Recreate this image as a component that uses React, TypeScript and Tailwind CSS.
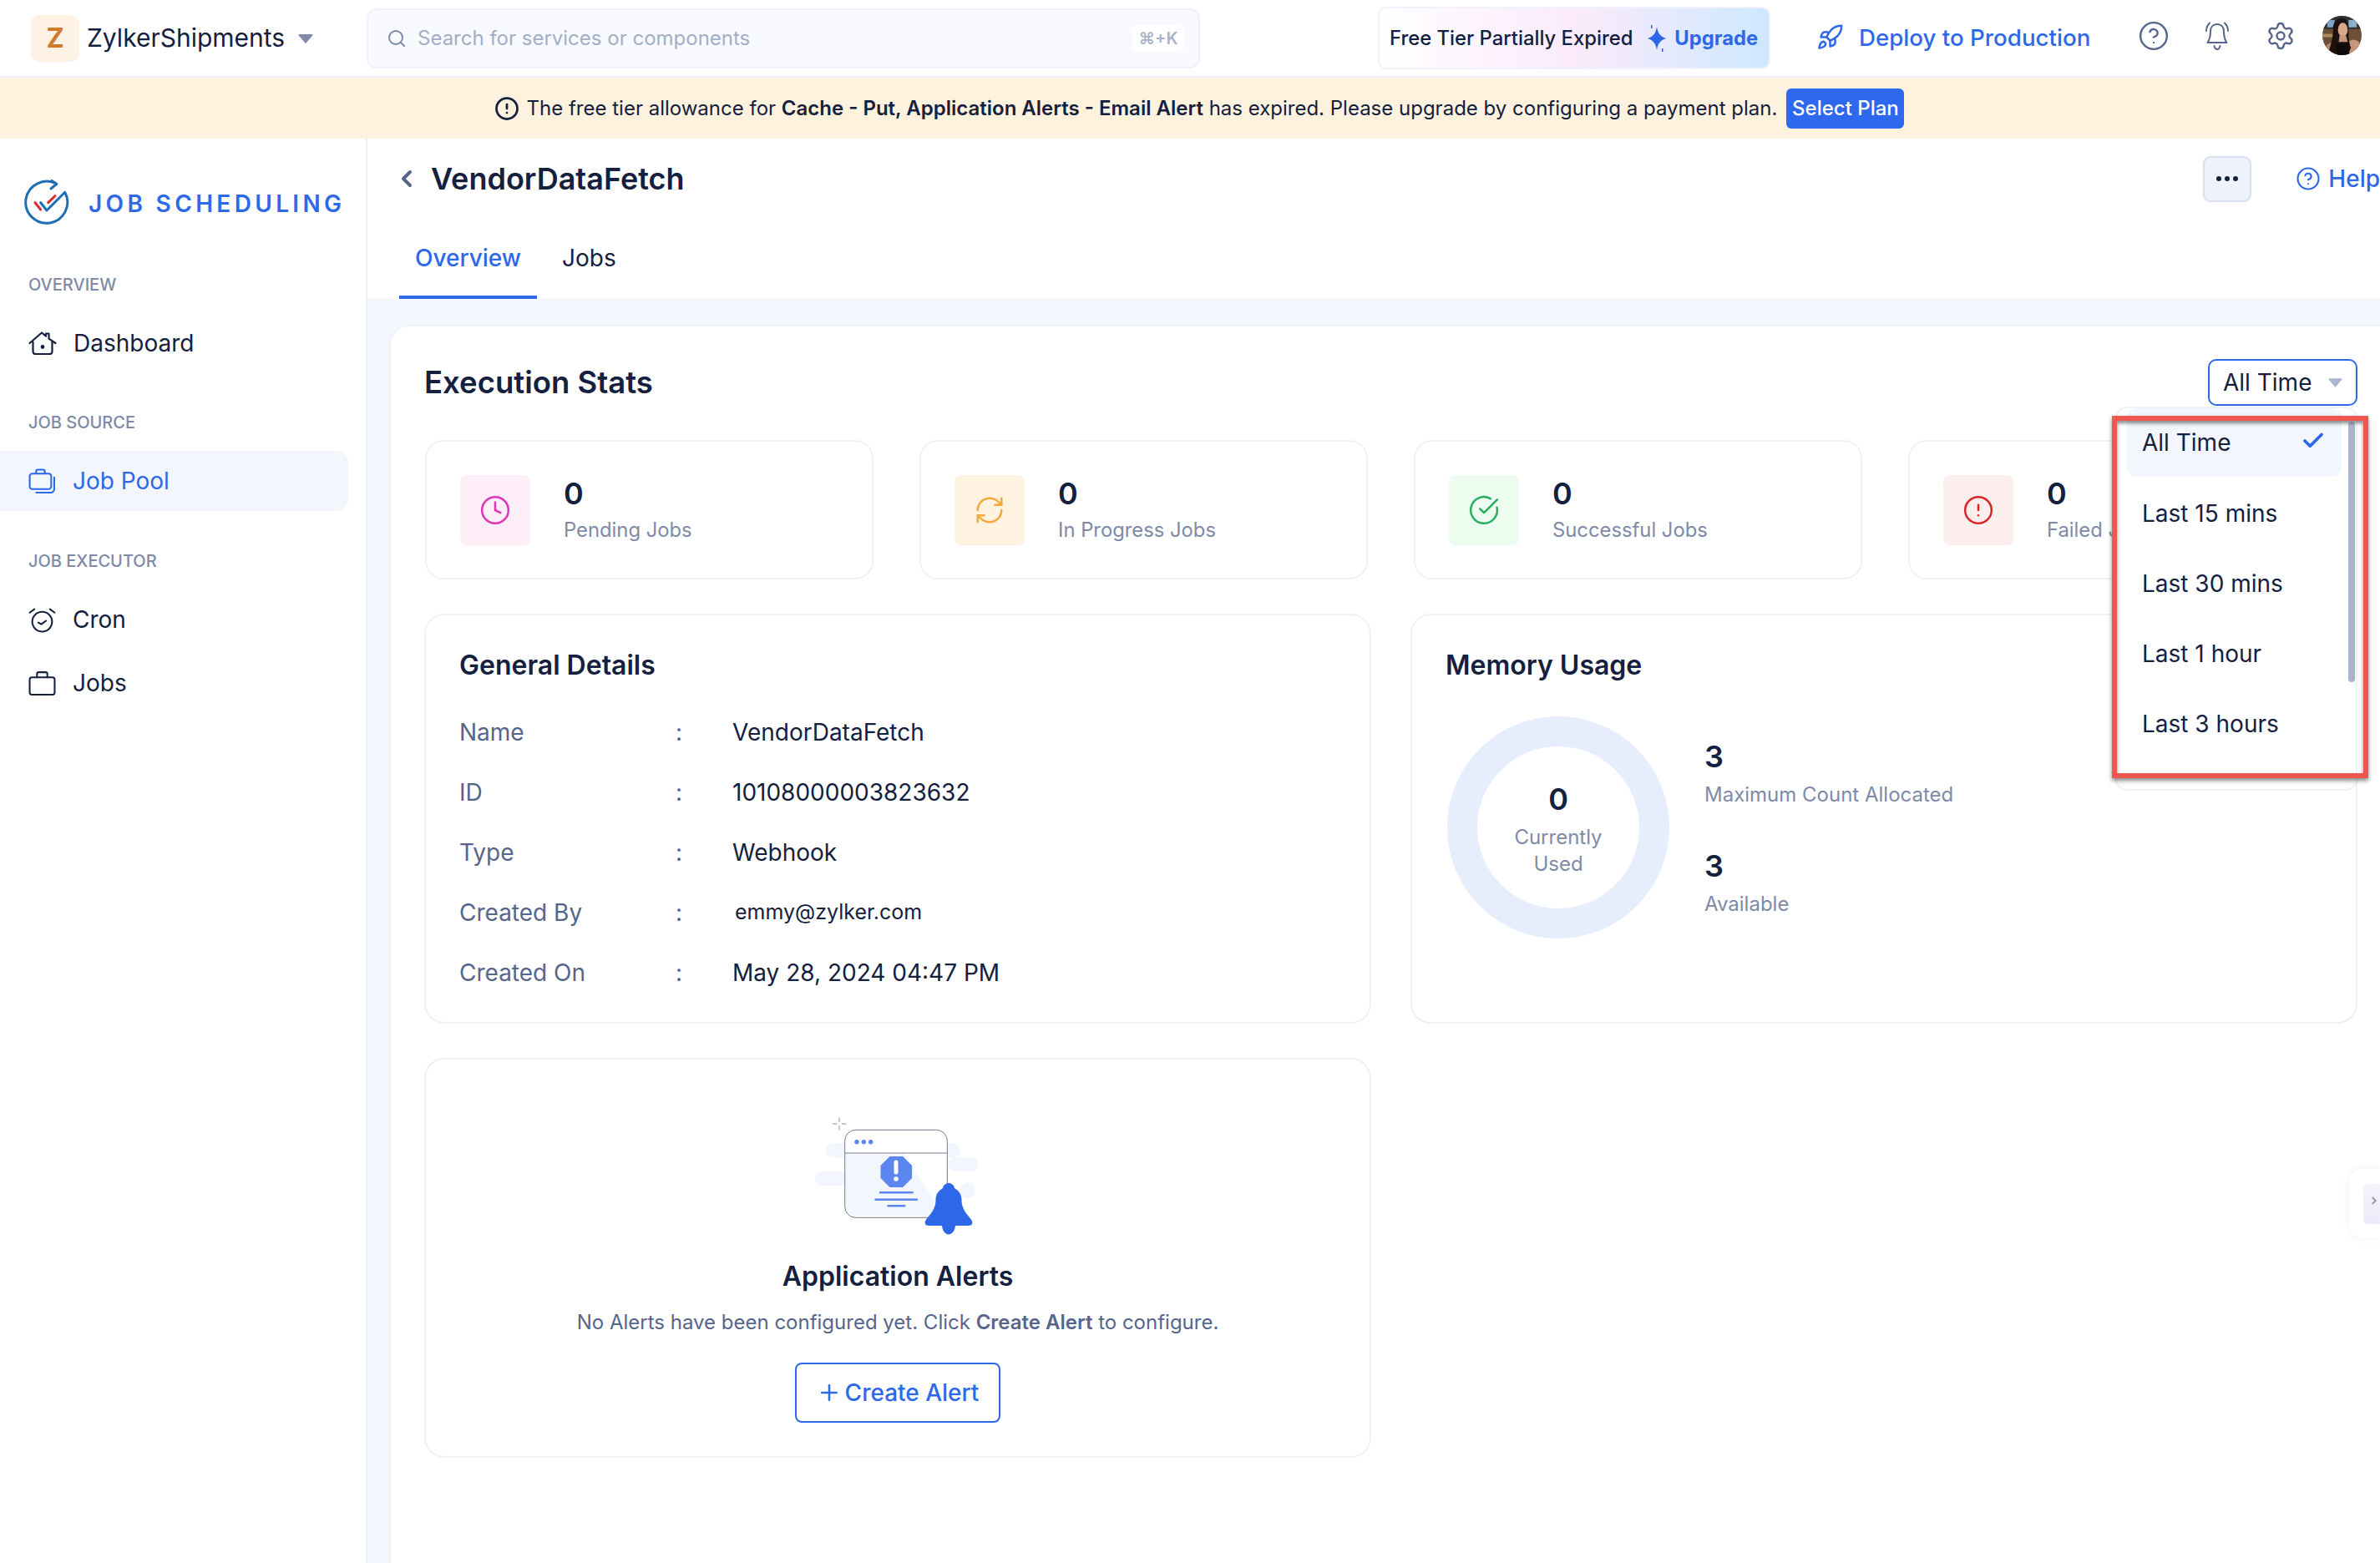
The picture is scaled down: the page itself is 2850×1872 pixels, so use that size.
import React from "react";
import { Search, CircleAlert, CircleHelp, Rocket, Settings, Clock, RefreshCw, CircleCheckBig, Check, ChevronLeft, ChevronRight, Plus } from "lucide-react";

const Caret = ({ className }: { className: string }) => (
  <svg viewBox="0 0 18 12" className={className} fill="currentColor">
    <path d="M1.5 1h15a1 1 0 0 1 .8 1.6l-7.5 8.6a1 1 0 0 1-1.6 0L.7 2.6A1 1 0 0 1 1.5 1z" />
  </svg>
);

const BellLines = () => (
  <svg viewBox="0 0 32 36" className="w-[32px] h-[36px] text-[#56658a]" fill="none" stroke="currentColor" strokeWidth="2" strokeLinecap="round" strokeLinejoin="round">
    <path d="M16 4c-5 0-8 3.5-8 8.5 0 7-1 10-3.5 13.5h23C25 22.5 24 19.500 24 12.500 24 7.500 21 4 16 4z" />
    <path d="M12.500 30c.5 2.500 1.800 4 3.500 4s3-1.500 3.500-4" />
    <path d="M3 12c0-4 1.500-7 4-9.500M29 12c0-4-1.500-7-4-9.500" />
  </svg>
);

const HouseIcon = () => (
  <svg viewBox="0 0 34 30" className="w-[34px] h-[30px] text-[#14203e]" fill="none" stroke="currentColor" strokeWidth="2.200" strokeLinecap="round" strokeLinejoin="round">
    <path d="M1.500 15 16 2.500l5 4.200V3.500h3.500v6.200L32.500 15" />
    <path d="M5.500 13.500V25a3 3 0 0 0 3 3h17a3 3 0 0 0 3-3V13.500" />
    <circle cx="17" cy="19.500" r="1.300" fill="currentColor" />
  </svg>
);

const PoolIcon = () => (
  <svg viewBox="0 0 32 30" className="w-[33px] h-[31px] text-[#2d68e8]" fill="none" stroke="currentColor" strokeWidth="2" strokeLinecap="round" strokeLinejoin="round">
    <rect x="1.500" y="6" width="25" height="18" rx="3" />
    <path d="M9 6V3.500a2 2 0 0 1 2-2h6a2 2 0 0 1 2 2V6" />
    <path d="M30 10.500V24a4 4 0 0 1-4 4H9" />
  </svg>
);

const CronIcon = () => (
  <svg viewBox="0 0 32 30" className="w-[33px] h-[31px] text-[#14203e]" fill="none" stroke="currentColor" strokeWidth="2" strokeLinecap="round" strokeLinejoin="round">
    <circle cx="16" cy="17" r="11.500" />
    <path d="M11.500 18l3.500 2 5.500-4" />
    <path d="M1.500 6.500 7 2.500M30.500 6.500 25 2.500" />
  </svg>
);

const BagIcon = () => (
  <svg viewBox="0 0 32 30" className="w-[33px] h-[31px] text-[#14203e]" fill="none" stroke="currentColor" strokeWidth="2" strokeLinecap="round" strokeLinejoin="round">
    <rect x="1.500" y="8" width="29" height="20" rx="2.500" />
    <path d="M10 8V4a2 2 0 0 1 2-2h8a2 2 0 0 1 2 2v4" />
  </svg>
);

const Logo = () => (
  <svg viewBox="0 0 54 54" className="w-[54px] h-[54px] overflow-visible" fill="none" strokeLinecap="round" strokeLinejoin="round">
    <path d="M35.700 3.300A25 25 0 1 0 45.700 13.300L24 35l-7.300-9.300" stroke="#1f6fb5" strokeWidth="3" />
    <path d="M30 -0.600 35.700 3.300 29 9" stroke="#1f6fb5" strokeWidth="3" />
    <path d="M10 25.700l6.700 8.300" stroke="#dc2f2f" strokeWidth="3" />
    <path d="M25.700 25.700 34 17.700" stroke="#dc2f2f" strokeWidth="3" />
  </svg>
);

const Sparkle = () => (
  <svg viewBox="0 0 24 34" className="w-[24px] h-[34px] text-[#2d68e8]" fill="currentColor">
    <path d="M12 3c1 7 4 12 11 14-7 2-10 7-11 14C11 24 8 19 1 17 8 15 11 10 12 3z" />
    <path d="M5 1h1.500v4H5zM18 29h1.500v4H18z" />
  </svg>
);

const Avatar = () => (
  <svg viewBox="0 0 48 48" className="w-[47px] h-[47px] rounded-full">
    <rect width="48" height="48" fill="#6d5038" />
    <rect width="48" height="16" fill="#2f3036" />
    <rect x="6" y="5" width="9" height="9" fill="#7fa6c8" />
    <rect x="32" y="5" width="10" height="9" fill="#8daecb" />
    <rect y="22" width="14" height="4" fill="#b08a5e" />
    <circle cx="38" cy="38" r="9" fill="#c79678" />
    <circle cx="11" cy="40" r="7" fill="#b88468" />
    <path d="M24 3c-7 0-11 5-11 13 0 8-1 14-5 27l7 5h16l4-9c-3-8-3-14-3-23 0-8-2-13-8-13z" fill="#1d1210" />
    <ellipse cx="25" cy="17" rx="6" ry="8.500" fill="#d7a78e" />
    <path d="M21 24h8l2 8H20z" fill="#c79678" />
    <path d="M17 33c4 2 10 2 15-1l1 16H18z" fill="#0f0b0b" />
  </svg>
);

const AlertArt = () => (
  <svg viewBox="0 0 200 142" className="w-[200px] h-[142px]" fill="none">
    <g fill="#f3f6fe">
      <rect x="14" y="32" width="30" height="17" rx="8.500" />
      <rect x="1" y="66" width="44" height="17" rx="8.500" />
      <rect x="150" y="32" width="25" height="17" rx="8.500" />
      <rect x="160" y="49" width="36" height="17" rx="8.500" />
      <path d="M183 79l7 3 3 7-3 7-7 3-6-3-3-7 3-7z" />
    </g>
    <rect x="36.700" y="16.300" width="122.600" height="105" rx="13" fill="#ffffff" />
    <path d="M37 44h70l48 75H50a13 13 0 0 1-13-13z" fill="#f2f6fe" />
    <rect x="36.700" y="16.300" width="122.600" height="105" rx="13" stroke="#77798a" strokeWidth="1" />
    <path d="M36.700 44h122.600" stroke="#77798a" strokeWidth="1" />
    <g fill="#5b86ef">
      <circle cx="51" cy="30.700" r="2.700" />
      <circle cx="59.300" cy="30.700" r="2.700" />
      <circle cx="67.700" cy="30.700" r="2.700" />
      <path d="M90.500 48h15.600l11 11v15l-11 11H90.500l-11-11V59z" />
    </g>
    <path d="M98 55v12" stroke="#fff" strokeWidth="5" strokeLinecap="round" />
    <circle cx="98" cy="75" r="2.800" fill="#fff" />
    <path d="M79 91.300h38.700M73.500 99.700h49.500M88.500 107.300h19.800" stroke="#5b86ef" strokeWidth="2.400" strokeLinecap="round" />
    <path d="M30 1.500v5.500M30 11v5.500M22 9h5.500M33 9h5.500" stroke="#8f919f" strokeWidth="1" />
    <path d="M161 80c-3.500 0-6.500 2.500-7 6-5 3-8.500 7-8.500 14 0 9-3.500 14-11 23-3.500 4.500-2 8 3.500 8h15c.5 6 4 10.500 8 10.500s7.500-4.500 8-10.500h15c5.500 0 7-3.500 3.500-8-7.500-9-11-14-11-23 0-7-3.500-11-8.500-14-.5-3.500-3.500-6-7-6z" fill="#2d68e8" />
  </svg>
);

const stats = [
  { value: "0", label: "Pending Jobs", tile: "bg-[#fdeef8]", icon: <Clock className="w-[38px] h-[38px] text-[#dd35b8]" strokeWidth={1.600} /> },
  { value: "0", label: "In Progress Jobs", tile: "bg-[#fef3e0]", icon: <RefreshCw className="w-[38px] h-[38px] text-[#f5a83c]" strokeWidth={1.600} /> },
  { value: "0", label: "Successful Jobs", tile: "bg-[#ecfcef]", icon: <CircleCheckBig className="w-[38px] h-[38px] text-[#27ae60]" strokeWidth={1.600} /> },
  { value: "0", label: "Failed Jobs", tile: "bg-[#fdeeee]", icon: <CircleAlert className="w-[38px] h-[38px] text-[#dc2626]" strokeWidth={1.600} /> },
];

const details = [
  { label: "Name", value: "VendorDataFetch", cls: "text-[28px]" },
  { label: "ID", value: "10108000003823632", cls: "text-[28px]" },
  { label: "Type", value: "Webhook", cls: "text-[28px]" },
  { label: "Created By", value: "emmy@zylker.com", cls: "text-[25px] pl-[3px]" },
  { label: "Created On", value: "May 28, 2024 04:47 PM", cls: "text-[28px]" },
];

const ranges = ["Last 15 mins", "Last 30 mins", "Last 1 hour", "Last 3 hours"];

export default function App() {
  return (
    <div className="relative w-[2850px] h-[1872px] overflow-hidden bg-white font-['Inter',sans-serif] text-[#14203e]">
      {/* top bar */}
      <header className="flex items-center h-[93px] border-b-2 border-[#eef0f9]">
        <div className="flex items-center w-[439px] pl-[37px]">
          <div className="flex items-center justify-center w-[58px] h-[56px] rounded-[10px] bg-[#fdf2e4] text-[32px] font-bold text-[#cf7a2c]">Z</div>
          <span className="ml-[9px] text-[30px]">ZylkerShipments</span>
          <Caret className="ml-[16px] w-[18px] h-[12px] text-[#7e8aa6]" />
        </div>
        <div className="flex items-center w-[998px] h-[72px] rounded-[12px] border-2 border-[#eef0fa] bg-[#f8faff] pl-[22px] pr-[17px]">
          <Search className="w-[24px] h-[24px] text-[#7e8aa6]" strokeWidth={2} />
          <span className="ml-[13px] text-[24px] text-[#a3aec6]">Search for services or components</span>
          <span className="ml-auto flex items-center justify-center w-[62px] h-[32px] rounded-[6px] bg-white text-[20px] font-semibold text-[#a8b2c8]">⌘+K</span>
        </div>
        <div className="ml-[213px] flex items-center w-[470px] h-[75px] rounded-[10px] border-2 border-[#f0f1fa] bg-gradient-to-r from-[#ffffff] via-[#fbeafb] to-[#cde8fe] pl-[12px]">
          <span className="text-[23.800px] font-medium whitespace-nowrap">Free Tier Partially Expired</span>
          <span className="ml-[17px]"><Sparkle /></span>
          <span className="ml-[9px] text-[23.800px] font-bold text-[#2d68e8]">Upgrade</span>
        </div>
        <Rocket className="ml-[55px] w-[33px] h-[33px] text-[#2d68e8] -mt-[2px]" strokeWidth={1.800} />
        <span className="ml-[18px] text-[27.700px] font-medium text-[#2d68e8] whitespace-nowrap">Deploy to Production</span>
        <CircleHelp className="ml-[57px] w-[38px] h-[38px] text-[#56658a] -mt-[6px]" strokeWidth={1.500} />
        <span className="ml-[41px] -mt-[6px]"><BellLines /></span>
        <Settings className="ml-[42px] w-[36px] h-[36px] text-[#56658a] -mt-[6px]" strokeWidth={1.600} />
        <span className="ml-[32px] -mt-[6px]"><Avatar /></span>
      </header>

      {/* expired banner */}
      <div className="flex items-center justify-center h-[73px] bg-[#fdf2dd] text-[24px] pl-[22px]">
        <CircleAlert className="w-[30px] h-[30px]" strokeWidth={2.200} />
        <span className="ml-[9px] whitespace-nowrap">
          The free tier allowance for <b className="font-semibold">Cache - Put, Application Alerts - Email Alert</b> has expired. Please upgrade by configuring a payment plan.
        </span>
        <button className="ml-[11px] h-[48px] w-[141px] rounded-[6px] bg-[#2d68ee] text-[24px] font-medium text-white">Select Plan</button>
      </div>

      <div className="flex h-[1706px]">
        {/* sidebar */}
        <aside className="w-[440px] shrink-0 border-r-2 border-[#eef0f9] pr-[21px]">
          <div className="flex items-center h-[54px] mt-[51px] pl-[32px]">
            <Logo />
            <span className="ml-[20px] text-[28px] font-semibold tracking-[0.155em] text-[#2d68e8] whitespace-nowrap">JOB SCHEDULING</span>
          </div>
          <div className="mt-[55px] pl-[34px] text-[20px] leading-[30px] font-medium text-[#7e8aa6]">OVERVIEW</div>
          <div className="flex items-center h-[72px] mt-[19px] pl-[34px] text-[28px]">
            <HouseIcon />
            <span className="ml-[20px]">Dashboard</span>
          </div>
          <div className="mt-[44px] pl-[34px] text-[20px] leading-[30px] font-medium text-[#7e8aa6]">JOB SOURCE</div>
          <div className="flex items-center h-[72px] mt-[19px] pl-[34px] rounded-r-[14px] bg-[#f3f6fd] text-[28px] text-[#2d68e8]">
            <PoolIcon />
            <span className="ml-[20px]">Job Pool</span>
          </div>
          <div className="mt-[45px] pl-[34px] text-[20px] leading-[30px] font-medium text-[#7e8aa6]">JOB EXECUTOR</div>
          <div className="flex items-center h-[72px] mt-[19px] pl-[34px] text-[28px]">
            <CronIcon />
            <span className="ml-[20px]">Cron</span>
          </div>
          <div className="flex items-center h-[72px] mt-[4px] pl-[34px] text-[28px]">
            <BagIcon />
            <span className="ml-[20px]">Jobs</span>
          </div>
        </aside>

        {/* main column */}
        <main className="flex-1 min-w-0 flex flex-col bg-[#f3f6fd]">
          <div className="h-[192px] bg-white">
            <div className="flex items-center h-[96px]">
              <ChevronLeft className="ml-[31px] w-[32px] h-[32px] text-[#56658a]" strokeWidth={3} />
              <h1 className="ml-[13px] text-[36px] font-semibold">VendorDataFetch</h1>
              <div className="ml-auto flex items-center justify-center w-[58px] h-[55px] rounded-[9px] border-2 border-[#d8dfef] bg-[#eef2fb]">
                <span className="flex gap-[4px]">
                  <i className="w-[6px] h-[6px] rounded-full bg-[#14203e]" />
                  <i className="w-[6px] h-[6px] rounded-full bg-[#14203e]" />
                  <i className="w-[6px] h-[6px] rounded-full bg-[#14203e]" />
                </span>
              </div>
              <CircleHelp className="ml-[53px] w-[30px] h-[30px] text-[#2d68e8] shrink-0" strokeWidth={1.700} />
              <span className="ml-[9px] text-[28px] font-medium text-[#2d68e8]">Help</span>
            </div>
            <div className="flex pl-[38px] h-[96px]">
              <div className="flex items-center justify-center w-[165px] h-[96px] pt-[2px] border-b-4 border-[#2d68e8] text-[28px] font-medium text-[#2d68e8]">Overview</div>
              <div className="flex items-center h-[94px] pl-[30px] text-[28px]">Jobs</div>
            </div>
          </div>
          <div className="flex-1 ml-[26px] mt-[31px] pl-[40px] rounded-tl-[24px] bg-white border-t-2 border-l-2 border-[#f0f2fa]">
            <div className="flex items-center justify-between h-[56px] mt-[39px] pr-[27px]">
              <h2 className="text-[36.500px] font-semibold">Execution Stats</h2>
              <div className="flex items-center w-[179px] h-[56px] pl-[16px] rounded-[10px] border-2 border-[#2d68e8] text-[28px]">
                All Time
                <Caret className="ml-[20px] w-[17px] h-[12px] text-[#aab4cc]" />
              </div>
            </div>

            <div className="flex gap-[55px] mt-[41px] ml-[1px] w-[2312px]">
              {stats.map((s) => (
                <div key={s.label} className="flex items-center w-[537px] h-[167px] shrink-0 pl-[40px] rounded-[22px] border-2 border-[#eff1f8]">
                  <div className={`flex items-center justify-center w-[84px] h-[84px] rounded-[8px] ${s.tile}`}>{s.icon}</div>
                  <div className="ml-[40px] pt-[2px]">
                    <div className="text-[36px] leading-[44px] font-semibold">{s.value}</div>
                    <div className="mt-[3px] text-[23.800px] leading-[38px] text-[#7e8aa6]">{s.label}</div>
                  </div>
                </div>
              ))}
            </div>

            <div className="grid grid-cols-[1134px_1134px] gap-x-[47px] gap-y-[41px] mt-[41px]">
              <section className="h-[491px] px-[40px] pt-[38px] rounded-[24px] border-2 border-[#eff1f8]">
                <h3 className="text-[32px] leading-[44px] font-semibold">General Details</h3>
                <div className="mt-[22px]">
                  {details.map((d) => (
                    <div key={d.label} className="flex items-center h-[72px]">
                      <span className="w-[259px] text-[28px] text-[#56658a]">{d.label}</span>
                      <span className="w-[68px] text-[28px] text-[#56658a]">:</span>
                      <span className={d.cls}>{d.value}</span>
                    </div>
                  ))}
                </div>
              </section>

              <section className="h-[491px] pl-[40px] pt-[38px] rounded-[24px] border-2 border-[#eff1f8]">
                <h3 className="text-[32px] leading-[44px] font-semibold">Memory Usage</h3>
                <div className="flex mt-[39px] ml-[2px]">
                  <div className="flex flex-col items-center justify-center w-[266px] h-[266px] rounded-full border-[36px] border-[#e6edfc] pt-[4px]">
                    <div className="text-[36px] leading-[44px] font-semibold">0</div>
                    <div className="mt-[8px] text-center text-[24px] leading-[32px] text-[#7e8aa6]">Currently<br />Used</div>
                  </div>
                  <div className="ml-[42px] mt-[26px]">
                    <div className="text-[36px] leading-[44px] font-semibold">3</div>
                    <div className="mt-[5px] text-[24px] leading-[38px] text-[#7e8aa6]">Maximum Count Allocated</div>
                    <div className="mt-[44px] text-[36px] leading-[44px] font-semibold">3</div>
                    <div className="mt-[5px] text-[24px] leading-[38px] text-[#7e8aa6]">Available</div>
                  </div>
                </div>
              </section>

              <section className="flex flex-col items-center h-[479px] pt-[68px] rounded-[24px] border-2 border-[#eff1f8]">
                <AlertArt />
                <h3 className="mt-[28px] text-[32px] leading-[44px] font-semibold">Application Alerts</h3>
                <p className="mt-[15px] text-[24px] leading-[36px] text-[#56658a]">
                  No Alerts have been configured yet. Click <b className="font-semibold">Create Alert</b> to configure.
                </p>
                <button className="flex items-center justify-center mt-[30px] w-[246px] h-[72px] rounded-[8px] border-2 border-[#2d68e8] text-[28px] font-medium text-[#2d68e8]">
                  <Plus className="w-[30px] h-[30px]" strokeWidth={2} />
                  <span className="ml-[4px]">Create Alert</span>
                </button>
              </section>
            </div>
          </div>
        </main>
      </div>

      {/* range menu */}
      <div className="absolute left-[2533px] top-[487px] w-[290px] h-[460px] rounded-[14px] border-2 border-[#eff1f8] bg-white pl-[12px]">
        <div className="flex items-center justify-between w-[257px] h-[82px] pl-[18px] pr-[19px] rounded-[12px] bg-[#f3f6fd] text-[28px]">
          All Time
          <Check className="w-[30px] h-[30px] text-[#2d68e8] -mt-[4px]" strokeWidth={3} />
        </div>
        <div className="mt-[2px]">
          {ranges.map((r) => (
            <div key={r} className="flex items-center h-[84px] pl-[18px] text-[28px]">{r}</div>
          ))}
        </div>
        <div className="absolute right-[1px] top-[16px] w-[8px] h-[312px] rounded-full bg-[#aab4cc]" />
      </div>

      {/* annotation box */}
      <div className="absolute left-[2529px] top-[498px] w-[307px] h-[434px] border-[6px] border-[#ee5650] shadow-[0_3px_5px_rgba(40,40,40,0.55),inset_0_3px_4px_rgba(40,40,40,0.55)]" />

      {/* side drawer handle */}
      <div className="absolute right-0 top-[1400px] w-[37px] h-[83px] rounded-l-[16px] bg-white shadow-[0_0_8px_rgba(120,130,170,0.12)] flex items-center justify-end">
        <div className="flex items-center w-[20px] h-[48px] rounded-l-[6px] bg-gradient-to-b from-[#f4f5fc] to-[#efe9fa]">
          <ChevronRight className="ml-[6px] w-[14px] h-[14px] text-[#9a9aa8] -mt-[8px]" strokeWidth={3.500} />
        </div>
      </div>
    </div>
  );
}
